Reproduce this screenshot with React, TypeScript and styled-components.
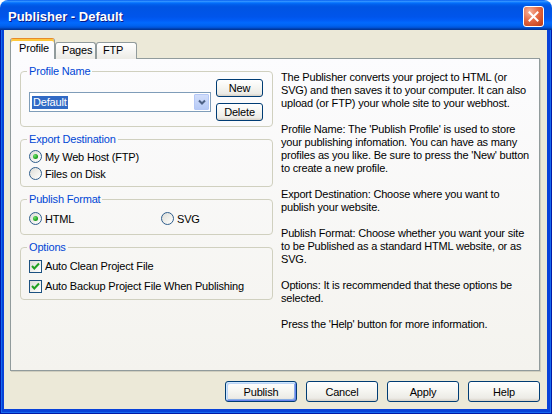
import React from "react";
import styled, { createGlobalStyle, css } from "styled-components";

const Global = createGlobalStyle`
  html, body { margin: 0; padding: 0; background: #ffffff; }
  body { font-family: "Liberation Sans", Arial, sans-serif; font-size: 11px; color: #000; letter-spacing: -0.18px; }
  * { box-sizing: border-box; }
`;

const Window = styled.div`
  width: 552px;
  height: 414px;
  display: flex;
  flex-direction: column;
  border-radius: 8px 8px 0 0;
  overflow: hidden;
`;

const TitleBar = styled.div`
  height: 30px;
  flex: none;
  display: flex;
  align-items: center;
  padding: 2px 8px 0 8px;
  background: linear-gradient(
    to bottom,
    #0058ee 0%,
    #3593ff 4%,
    #288eff 6%,
    #127dff 8%,
    #036ffc 10%,
    #0262ee 14%,
    #0057e5 20%,
    #0054e3 24%,
    #0055eb 56%,
    #005bf5 66%,
    #026afe 76%,
    #0062ef 86%,
    #0052d6 92%,
    #0040ab 96%,
    #003092 100%
  );
`;

const Title = styled.span`
  font-family: "Liberation Sans", Arial, sans-serif;
  font-weight: bold;
  font-size: 13px;
  color: #ffffff;
  text-shadow: 1px 1px 0 #0a1883;
  letter-spacing: 0;
`;

const CloseButton = styled.div`
  margin-left: auto;
  width: 21px;
  height: 21px;
  border: 1px solid #ffffff;
  border-radius: 3px;
  background: radial-gradient(circle at 30% 25%, #f7b39c 0%, #e66a45 45%, #cc4a22 80%, #b8381a 100%);
  display: flex;
  align-items: center;
  justify-content: center;
`;

const Frame = styled.div`
  flex: 1;
  display: flex;
  flex-direction: column;
  padding: 0 5px 5px 4px;
  background: #0842d9;
  box-shadow: inset 1px 0 0 #0019a8, inset -1px 0 0 #0019a8, inset 0 -1px 0 #0019a8,
    inset 2px 0 0 #166aee, inset -2px 0 0 #166aee, inset 0 -2px 0 #166aee;
`;

const Body = styled.div`
  flex: 1;
  display: flex;
  flex-direction: column;
  background: #ece9d8;
  padding: 8px 7px 7px 6px;
`;

const TabStrip = styled.div`
  display: flex;
  align-items: flex-end;
  height: 21px;
  margin-bottom: -1px;
  position: relative;
  z-index: 1;
`;

const Tab = styled.div<{ $active?: boolean; $w: number }>`
  width: ${(p) => p.$w}px;
  height: 17px;
  padding: 0 0 0 6px;
  border: 1px solid #919b9c;
  border-bottom: none;
  border-radius: 3px 3px 0 0;
  background: linear-gradient(#ffffff, #ecebe6);
  line-height: 15px;
  white-space: nowrap;
  ${(p) =>
    p.$active &&
    css`
      height: 21px;
      padding-left: 8px;
      background: #fcfcfe;
      border-top: 1px solid #e68b2c;
      box-shadow: inset 0 2px 0 #ffc83c;
      line-height: 18px;
    `}
`;

const Panel = styled.div`
  height: 313px;
  flex: none;
  display: flex;
  gap: 8px;
  padding: 6px 9px;
  border: 1px solid #919b9c;
  background: linear-gradient(#fcfcfe, #f4f3ee);
  box-shadow: 1px 1px 0 #d0cebf;
`;

const LeftColumn = styled.div`
  width: 253px;
  flex: none;
  display: flex;
  flex-direction: column;
  gap: 6px;
`;

const Group = styled.fieldset<{ $pad: string }>`
  margin: 0;
  min-width: 0;
  border: 1px solid #d0d0bf;
  border-radius: 4px;
  padding: ${(p) => p.$pad};
`;

const Legend = styled.legend`
  color: #0046d5;
  padding: 0 2px;
  margin-left: -2px;
  font-size: 11px;
  line-height: 13px;
`;

const ProfileRow = styled.div`
  display: flex;
  gap: 5px;
`;

const Combo = styled.div`
  width: 182px;
  height: 20px;
  margin-top: 13px;
  border: 1px solid #7f9db9;
  background: #ffffff;
  padding: 1px;
  display: flex;
  align-items: center;
`;

const ComboText = styled.span`
  flex: 1;
  padding-left: 1px;
`;

const Selected = styled.span`
  background: #316ac5;
  color: #ffffff;
  padding: 0 1px;
  line-height: 13px;
  display: inline-block;
`;

const ComboButton = styled.div`
  width: 15px;
  height: 16px;
  border: 1px solid #b5c8f6;
  border-radius: 1px;
  background: linear-gradient(#d2defb, #b6caf6);
  display: flex;
  align-items: center;
  justify-content: center;
`;

const ButtonColumn = styled.div`
  display: flex;
  flex-direction: column;
  gap: 6px;
`;

const Button = styled.div<{ $w: number; $h: number; $default?: boolean }>`
  width: ${(p) => p.$w}px;
  height: ${(p) => p.$h}px;
  border: 1px solid #003c74;
  border-radius: 3px;
  background: linear-gradient(180deg, #ffffff 0%, #f6f6f2 45%, #ecebe6 85%, #d6d0c5 100%);
  display: flex;
  align-items: center;
  justify-content: center;
  font-size: 11px;
  color: #000;
  ${(p) =>
    p.$default &&
    css`
      box-shadow: inset 1px 1px 0 #cee7ff, inset -1px -1px 0 #6982ee, inset 2px 2px 0 #bcd4f6,
        inset -2px -2px 0 #89ade4;
    `}
`;

const OptionRow = styled.div<{ $h: number }>`
  height: ${(p) => p.$h}px;
  display: flex;
  align-items: center;
  gap: 3px;
  white-space: nowrap;
`;

const FormatGrid = styled.div`
  display: grid;
  grid-template-columns: 132px 1fr;
`;

const Radio = styled.span`
  width: 13px;
  height: 13px;
  flex: none;
  border-radius: 50%;
  border: 1px solid #2e5d8c;
  background: linear-gradient(135deg, #dcdcd7 0%, #f2f2ee 60%, #ffffff 100%);
  display: flex;
  align-items: center;
  justify-content: center;
`;

const Dot = styled.span`
  width: 5px;
  height: 5px;
  border-radius: 50%;
  background: radial-gradient(circle at 35% 35%, #6fe36b 0%, #21a121 60%, #138813 100%);
`;

const Check = styled.span`
  width: 13px;
  height: 13px;
  flex: none;
  border: 1px solid #1c5180;
  background: linear-gradient(135deg, #dcdcd7 0%, #f2f2ee 60%, #ffffff 100%);
  display: flex;
  align-items: center;
  justify-content: center;
`;

const HelpText = styled.div`
  flex: 1;
  padding-top: 6px;
  line-height: 13px;
  white-space: nowrap;
`;

const Para = styled.p`
  margin: 0 0 13px 0;
`;

const Footer = styled.div`
  display: flex;
  justify-content: flex-end;
  gap: 9px;
  margin-top: 10px;
`;

const ChevronIcon = () => (
  <svg width="8" height="6" viewBox="0 0 8 6">
    <polyline points="1,1.5 4,4.5 7,1.5" fill="none" stroke="#4d6185" strokeWidth="2" />
  </svg>
);

const CheckIcon = () => (
  <svg width="9" height="9" viewBox="0 0 9 9">
    <polyline points="1,4 3.3,6.5 8,1.5" fill="none" stroke="#21a121" strokeWidth="2" />
  </svg>
);

const CloseIcon = () => (
  <svg width="11" height="11" viewBox="0 0 11 11">
    <path d="M1.5 1.5 L9.5 9.5 M9.5 1.5 L1.5 9.5" stroke="#ffffff" strokeWidth="2" strokeLinecap="square" />
  </svg>
);

const RadioOption = ({ label, checked }: { label: string; checked?: boolean }) => (
  <OptionRow $h={17}>
    <Radio>{checked && <Dot />}</Radio>
    <span>{label}</span>
  </OptionRow>
);

const CheckOption = ({ label }: { label: string }) => (
  <OptionRow $h={20}>
    <Check>
      <CheckIcon />
    </Check>
    <span>{label}</span>
  </OptionRow>
);

const paragraphs: string[][] = [
  [
    "The Publisher converts your project to HTML (or",
    "SVG) and then saves it to your computer. It can also",
    "upload (or FTP) your whole site to your webhost.",
  ],
  [
    "Profile Name: The 'Publish Profile' is used to store",
    "your publishing infomation. You can have as many",
    "profiles as you like. Be sure to press the 'New' button",
    "to create a new profile.",
  ],
  ["Export Destination: Choose where you want to", "publish your website."],
  [
    "Publish Format: Choose whether you want your site",
    "to be Published as a standard HTML website, or as",
    "SVG.",
  ],
  ["Options: It is recommended that these options be", "selected."],
  ["Press the 'Help' button for more information."],
];

export default function App() {
  return (
    <>
      <Global />
      <Window>
        <TitleBar>
          <Title>Publisher - Default</Title>
          <CloseButton>
            <CloseIcon />
          </CloseButton>
        </TitleBar>
        <Frame>
          <Body>
            <TabStrip>
              <Tab $active $w={45}>Profile</Tab>
              <Tab $w={41}>Pages</Tab>
              <Tab $w={41}>FTP</Tab>
            </TabStrip>
            <Panel>
              <LeftColumn>
                <Group $pad="1px 9px 5px 8px">
                  <Legend>Profile Name</Legend>
                  <ProfileRow>
                    <Combo>
                      <ComboText>
                        <Selected>Default</Selected>
                      </ComboText>
                      <ComboButton>
                        <ChevronIcon />
                      </ComboButton>
                    </Combo>
                    <ButtonColumn>
                      <Button $w={47} $h={18}>New</Button>
                      <Button $w={47} $h={18}>Delete</Button>
                    </ButtonColumn>
                  </ProfileRow>
                </Group>
                <Group $pad="2px 8px 4px 8px">
                  <Legend>Export Destination</Legend>
                  <RadioOption label="My Web Host (FTP)" checked />
                  <RadioOption label="Files on Disk" />
                </Group>
                <Group $pad="4px 8px 7px 8px">
                  <Legend>Publish Format</Legend>
                  <FormatGrid>
                    <RadioOption label="HTML" checked />
                    <RadioOption label="SVG" />
                  </FormatGrid>
                </Group>
                <Group $pad="2px 8px 3px 8px">
                  <Legend>Options</Legend>
                  <CheckOption label="Auto Clean Project File" />
                  <CheckOption label="Auto Backup Project File When Publishing" />
                </Group>
              </LeftColumn>
              <HelpText>
                {paragraphs.map((lines, i) => (
                  <Para key={i}>
                    {lines.map((l, j) => (
                      <React.Fragment key={j}>
                        {l}
                        {j < lines.length - 1 && <br />}
                      </React.Fragment>
                    ))}
                  </Para>
                ))}
              </HelpText>
            </Panel>
            <Footer>
              <Button $w={72} $h={21} $default>Publish</Button>
              <Button $w={72} $h={21}>Cancel</Button>
              <Button $w={72} $h={21}>Apply</Button>
              <Button $w={72} $h={21}>Help</Button>
            </Footer>
          </Body>
        </Frame>
      </Window>
    </>
  );
}
